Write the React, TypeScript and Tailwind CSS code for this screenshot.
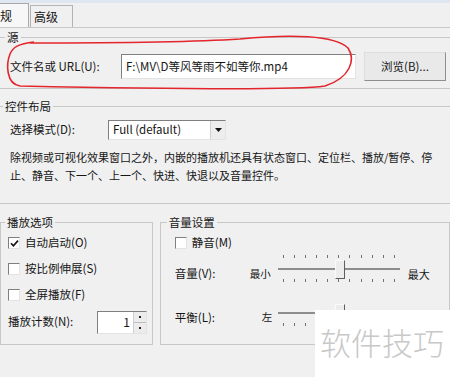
const sunken = "border border-t-[#7f7f7f] border-l-[#7f7f7f] border-r-[#e3e3e3] border-b-[#e3e3e3] bg-white";

function Check({ checked = false }: { checked?: boolean }) {
  return (
    <span className={`${sunken} flex h-[12px] w-[12px] shrink-0 items-center justify-center`}>
      {checked && (
        <svg width="9" height="9" viewBox="0 0 9 9">
          <path d="M1 4.2 L3.4 6.8 L8 1.6" fill="none" stroke="#111" strokeWidth="1.6" />
        </svg>
      )}
    </span>
  );
}

function Group({
  title,
  className = "",
  titleClass = "ml-[4px]",
  bodyClass = "",
  children,
}: {
  title: string;
  className?: string;
  titleClass?: string;
  bodyClass?: string;
  children: React.ReactNode;
}) {
  return (
    <div className={`border border-[#c7c7c7] ${className}`}>
      <div className={`-mt-[8px] w-fit bg-[#f0f0f0] px-[2px] leading-[14px] text-[11.5px] ${titleClass}`}>{title}</div>
      <div className={bodyClass}>{children}</div>
    </div>
  );
}

function Slider({ topTicks = true }: { topTicks?: boolean }) {
  const ticks = Array.from({ length: 11 }, (_, i) => <span key={i} className="h-[3px] w-px bg-[#6f6f6f]" />);
  return (
    <div className="relative h-[32px] w-[122px] shrink-0">
      <div className={`flex justify-between px-[5px] pt-[2px] ${topTicks ? "" : "invisible"}`}>{ticks}</div>
      <div className="mt-[10px] h-[2px] bg-[#8d8d8d]" />
      <div className="mt-[9px] flex justify-between px-[5px]">{ticks}</div>
      <div className="absolute left-[57px] top-[7px] h-[19px] w-[10px] border border-t-[#fafafa] border-l-[#fafafa] border-r-[#5e5e5e] border-b-[#5e5e5e] bg-[#ececec]" />
    </div>
  );
}

export default function App() {
  return (
    <div className="relative h-[377px] w-[450px] overflow-hidden bg-[#f0f0f0] font-['Noto_Sans_CJK_SC','Noto_Sans',sans-serif] text-[11px] text-[#151515]">
      <div className="h-[3px] bg-[#dde6f1]" />

      {/* tabs */}
      <div className="flex h-[24px] items-end">
        <div className="-ml-[22px] flex h-[24px] w-[51px] items-center justify-end border-r border-t border-[#a9a9a9] bg-[#f7f7f7] pr-[16px] text-[12px]">
          常规
        </div>
        <div className="ml-[1px] flex h-[22px] w-[43px] items-center border-l border-r border-t border-[#b4b4b4] bg-[#f0f0f0] pl-[3px] text-[12px]">
          高级
        </div>
      </div>

      <div className="border-t border-[#c9c9c9]">
        <Group title="源" titleClass="ml-[7px]" className="-ml-[3px] mt-[9px] w-[470px] pb-[7px]" bodyClass="pl-[12px]">
          <div className="mt-[8px] flex h-[29px] items-center">
            <span className="w-[111px] text-[11.5px]">文件名或 URL(U):</span>
            <div className={`${sunken} flex h-[25px] w-[235px] items-center pl-[4px] text-[11.5px]`}>
              {"F:\\MV\\D等风等雨不如等你.mp4"}
            </div>
            <button className="ml-[8px] flex h-[29px] w-[82px] items-center justify-center border border-t-[#dcdcdc] border-l-[#dcdcdc] border-r-[#8e8e8e] border-b-[#8e8e8e] bg-[#e9e9e9] text-[11.5px]">
              浏览(B)...
            </button>
          </div>
        </Group>

        <Group title="控件布局" titleClass="ml-[5px]" className="-ml-[3px] mt-[17px] w-[470px] pb-[19px]" bodyClass="pl-[12px]">
          <div className="mt-[7px] flex h-[20px] items-center">
            <span className="w-[98px] text-[11.5px]">选择模式(D):</span>
            <div className={`${sunken} flex h-[20px] w-[118px] items-center justify-between pl-[4px]`}>
              <span className="text-[11.5px]">Full (default)</span>
              <span className="flex h-full w-[15px] items-center justify-center border-l border-[#d0d0d0] bg-[#ededed]">
                <svg width="7" height="4" viewBox="0 0 7 4">
                  <path d="M0 0 H7 L3.5 4 Z" fill="#111" />
                </svg>
              </span>
            </div>
          </div>
          <div className="mt-[8px] whitespace-nowrap leading-[18px]">
            <div>除视频或可视化效果窗口之外，内嵌的播放机还具有状态窗口、定位栏、播放/暂停、停</div>
            <div>止、静音、下一个、上一个、快进、快退以及音量控件。</div>
          </div>
        </Group>

        <div className="mt-[18px] flex gap-[7px]">
          <Group title="播放选项" titleClass="ml-[4px]" className="w-[158px] pb-[11px]" bodyClass="pl-[7px]">
            <div className="mt-[4px] flex flex-col gap-[6px]">
              <label className="flex h-[20px] items-center gap-[5px] text-[11.5px]">
                <Check checked />
                自动启动(O)
              </label>
              <label className="flex h-[20px] items-center gap-[5px] text-[11.5px]">
                <Check />
                按比例伸展(S)
              </label>
              <label className="flex h-[20px] items-center gap-[5px] text-[11.5px]">
                <Check />
                全屏播放(F)
              </label>
              <div className="flex h-[22px] items-center">
                <span className="w-[89px] text-[11.5px]">播放计数(N):</span>
                <div className={`${sunken} flex h-[23px] w-[50px] items-center`}>
                  <span className="flex-1 pr-[3px] text-right text-[12px]">1</span>
                  <div className="flex h-full w-[13px] flex-col border-l border-[#cfcfcf]">
                    <span className="flex flex-1 items-center justify-center border-b border-[#bdbdbd] bg-[#ececec]">
                      <span className="h-[2px] w-[2px] bg-[#222]" />
                    </span>
                    <span className="flex flex-1 items-center justify-center bg-[#ececec]">
                      <span className="h-[2px] w-[2px] bg-[#222]" />
                    </span>
                  </div>
                </div>
              </div>
            </div>
          </Group>

          <Group title="音量设置" titleClass="ml-[6px]" className="w-[300px] pb-[15px]" bodyClass="pl-[14px]">
            <label className="mt-[4px] flex h-[20px] items-center gap-[5px] text-[11.5px]">
              <Check />
              静音(M)
            </label>
            <div className="flex h-[32px] items-center">
              <span className="w-[75px] pt-[10px] text-[11.5px]">音量(V):</span>
              <span className="w-[22px] pt-[10px] text-[10.5px]">最小</span>
              <span className="ml-[6px] flex"><Slider /></span>
              <span className="ml-[8px] pt-[10px] text-[11px]">最大</span>
            </div>
            <div className="mt-[12px] flex h-[32px] items-center">
              <span className="w-[87px] pt-[10px] text-[11.5px]">平衡(L):</span>
              <span className="w-[16px] pt-[8px] text-[10.5px]">左</span>
              <Slider topTicks={false} />
            </div>
          </Group>
        </div>
      </div>

      {/* red hand-drawn mark */}
      <svg className="pointer-events-none absolute left-0 top-0" width="450" height="377">
        <path
          d="M30 43 C90 43 180 43 240 39 C290 34 335 35 348 48 C356 60 350 78 325 86 C290 91 120 88 20 86 C6 84 6 64 10 54 C13 47 18 44 34 42"
          fill="none"
          stroke="#e3262d"
          strokeWidth="1.6"
        />
      </svg>

      {/* watermark */}
      <div className="absolute bottom-0 right-0 h-[67px] w-[135px] bg-white pl-[5px] pt-[16px]">
        <span className="text-[31px] font-light leading-[32px] text-[#c8c8c8]">软件技巧</span>
      </div>
    </div>
  );
}
